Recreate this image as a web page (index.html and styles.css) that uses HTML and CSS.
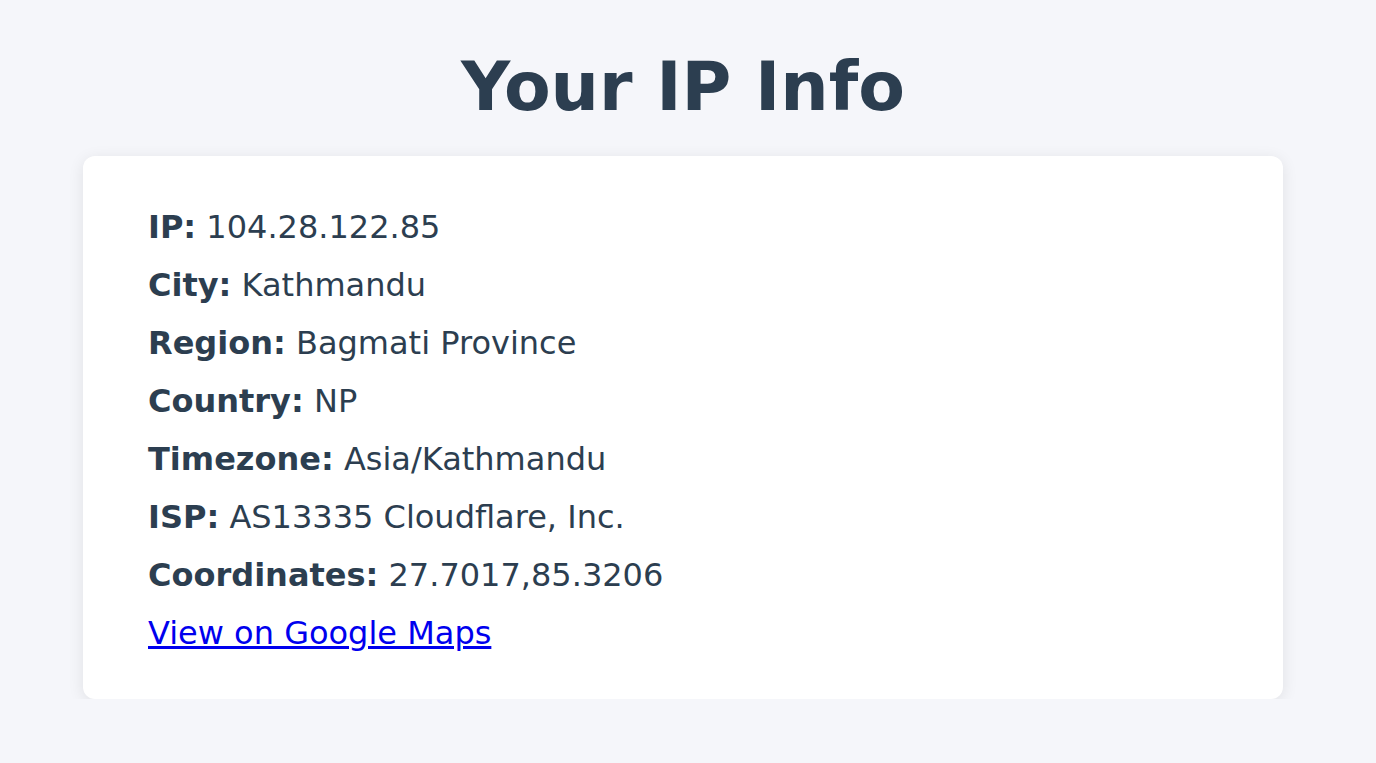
FILE: index.html
```html
<!DOCTYPE html>
<html lang="en">
<head>
<meta charset="utf-8">
<title>Your IP Info</title>
<link rel="stylesheet" href="styles.css">
</head>
<body>
<main class="page">
  <h1 class="title">Your IP Info</h1>
  <div class="card">
    <p class="row"><strong>IP:</strong> 104.28.122.85</p>
    <p class="row"><strong>City:</strong> Kathmandu</p>
    <p class="row"><strong>Region:</strong> Bagmati Province</p>
    <p class="row"><strong>Country:</strong> NP</p>
    <p class="row"><strong>Timezone:</strong> Asia/Kathmandu</p>
    <p class="row"><strong>ISP:</strong> AS13335 Cloudflare, Inc.</p>
    <p class="row"><strong>Coordinates:</strong> 27.7017,85.3206</p>
    <p class="row"><a class="maplink" href="#">View on Google Maps</a></p>
  </div>
</main>
</body>
</html>
```
FILE: styles.css
```css
html, body {
  margin: 0;
  padding: 0;
}
body {
  background: #f5f6fa;
  color: #2c3e50;
  font-family: "DejaVu Sans", Verdana, sans-serif;
}
.page {
  width: 1200px;
  margin-left: 83px;
}
.title {
  margin: 0;
  padding-top: 43px;
  height: 156px;
  box-sizing: border-box;
  text-align: center;
  font-size: 68px;
  line-height: 88px;
  font-weight: bold;
}
.card {
  background: #ffffff;
  border-radius: 12px;
  box-shadow: 0 3px 16px rgba(0, 0, 0, 0.09);
  padding: 42px 64px 37px 65px;
}
.row {
  margin: 0;
  font-size: 32px;
  line-height: 58px;
}
.maplink {
  color: #0000ee;
}
```
